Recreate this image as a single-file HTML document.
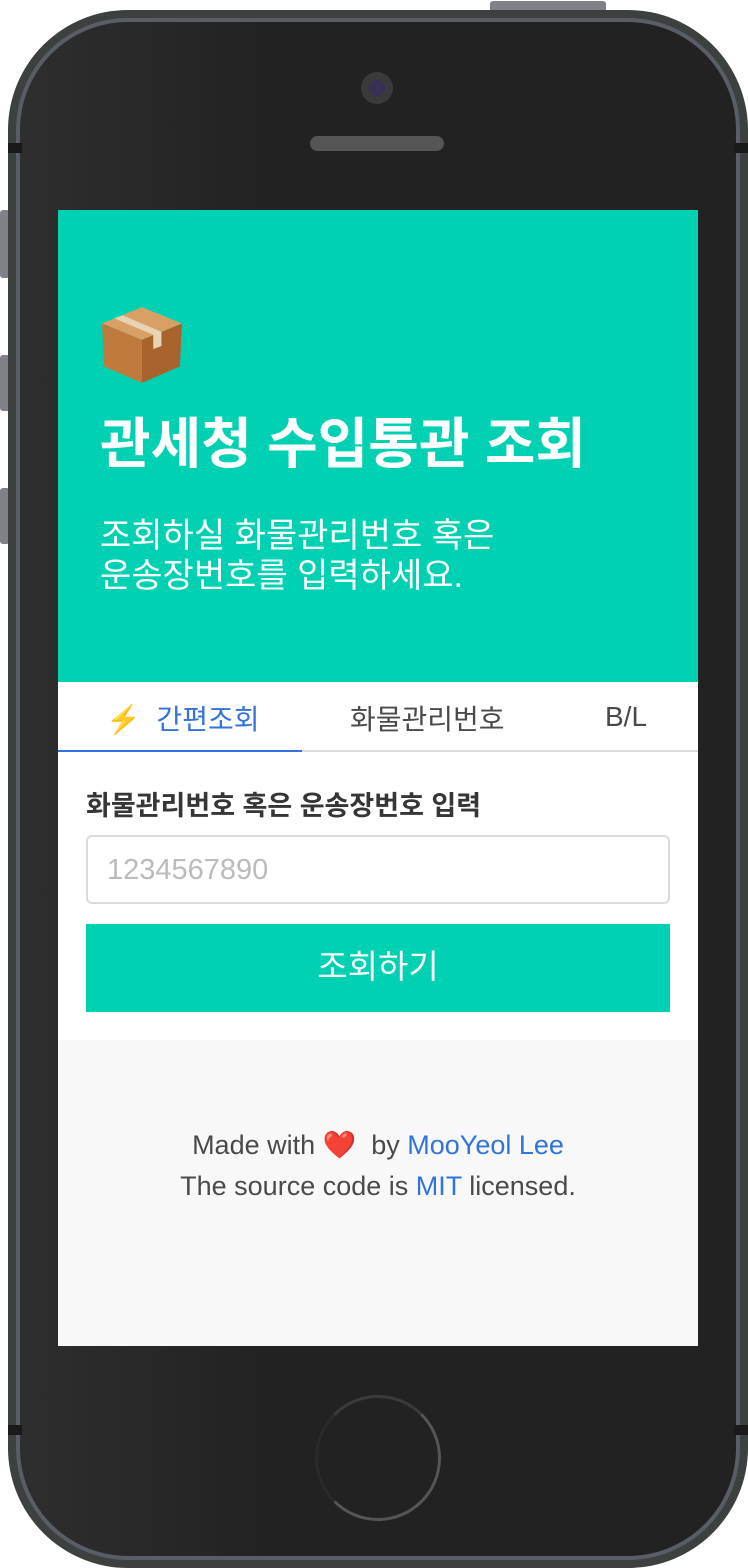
<!DOCTYPE html>
<html><head><meta charset="utf-8">
<style>
*{margin:0;padding:0;box-sizing:border-box}
body{width:748px;height:1568px;background:#fff;position:relative;overflow:hidden;font-family:"Liberation Sans","Noto Sans CJK KR",sans-serif}
.btn{position:absolute;background:#808088;border-radius:3px}
.body{position:absolute;left:8px;top:10px;width:740px;height:1558px;border-radius:120px;background:#3c403e}
.rim{position:absolute;left:16px;top:18px;width:724px;height:1542px;border-radius:112px;background:#585d66}
.face{position:absolute;left:20px;top:22px;width:716px;height:1534px;border-radius:108px;background:linear-gradient(90deg,#2e2e2e,#222 35%,#222)}
.screen{position:absolute;left:58px;top:210px;width:640px;height:1136px;background:#f8f8f8;overflow:hidden}
.hero{height:472px;background:#00d1b2;position:relative;color:#fff}
.hero h1{position:absolute;left:42px;top:196px;font-size:55px;font-weight:bold;line-height:76px;white-space:nowrap}
.hero p{position:absolute;left:42px;top:306px;font-size:34px;line-height:40px;white-space:nowrap}
.tabs{height:70px;background:#fff;position:relative;border-bottom:2px solid #dbdbdb}
.tab{position:absolute;top:16px;font-size:28px;color:#4a4a4a;white-space:nowrap}
.form{background:#fff;height:288px;position:relative}
.label{position:absolute;left:28px;top:32px;font-size:27px;font-weight:bold;color:#363636;white-space:nowrap}
.inp{position:absolute;left:28px;top:83px;width:584px;height:69px;border:2px solid #dbdbdb;border-radius:6px;font-size:29px;color:#bbb;padding:17px 0 0 19px}
.go{position:absolute;left:28px;top:172px;width:584px;height:88px;background:#00d1b2;color:#fff;font-size:33px;text-align:center;line-height:86px}
.foot{text-align:center;font-size:27px;color:#4a4a4a;line-height:41px;padding-top:85px}
.foot a{color:#3273dc;text-decoration:none}
</style></head><body>
<div class="btn" style="left:490px;top:1px;width:116px;height:14px"></div>
<div class="btn" style="left:0;top:210px;width:10px;height:68px"></div>
<div class="btn" style="left:0;top:355px;width:10px;height:56px"></div>
<div class="btn" style="left:0;top:488px;width:10px;height:56px"></div>
<div class="body"></div>
<div class="rim"></div>
<div class="face"></div>
<div style="position:absolute;left:8px;top:143px;width:14px;height:10px;background:#1a1a1a"></div>
<div style="position:absolute;left:734px;top:143px;width:14px;height:10px;background:#1a1a1a"></div>
<div style="position:absolute;left:8px;top:1425px;width:14px;height:10px;background:#1a1a1a"></div>
<div style="position:absolute;left:734px;top:1425px;width:14px;height:10px;background:#1a1a1a"></div>
<div style="position:absolute;left:361px;top:72px;width:32px;height:32px;border-radius:50%;background:#3a3a3a"></div>
<div style="position:absolute;left:369px;top:80px;width:16px;height:16px;border-radius:50%;background:#3a2f55"></div>
<div style="position:absolute;left:310px;top:136px;width:134px;height:15px;border-radius:8px;background:#555"></div>
<div style="position:absolute;left:315px;top:1395px;width:126px;height:126px;border-radius:50%;border:3px solid #555;border-left-color:#2a2a2a;border-top-color:#3a3a3a"></div>
<div class="screen">
 <div class="hero">
  <svg style="position:absolute;left:42px;top:91px" width="84" height="86" viewBox="0 0 82 84"><polygon points="41,6 80,22 41,38 2,22" fill="#d9a066"/><polygon points="2,22 41,38 41,80 4,64" fill="#c17a3e"/><polygon points="41,38 80,22 78,64 41,80" fill="#a8642c"/><polygon points="22,14 60,30 60,44 52,47 52,33 14,17" fill="#e8d3b4"/></svg>
  <h1>관세청 수입통관 조회</h1>
  <p>조회하실 화물관리번호 혹은<br>운송장번호를 입력하세요.</p>
 </div>
 <div class="tabs">
  <div class="tab" style="left:48px;color:#3273dc"><span style="color:#f5b400">⚡</span>&nbsp; 간편조회</div>
  <div class="tab" style="left:292px">화물관리번호</div>
  <div class="tab" style="left:547px;top:19px">B/L</div>
  <div style="position:absolute;left:0;bottom:-2px;width:244px;height:2px;background:#3273dc"></div>
 </div>
 <div class="form">
  <div class="label">화물관리번호 혹은 운송장번호 입력</div>
  <div class="inp">1234567890</div>
  <div class="go">조회하기</div>
 </div>
 <div class="foot">Made with <span style="color:#e0202a">❤️</span>&nbsp; by <a>MooYeol Lee</a><br>The source code is <a>MIT</a> licensed.</div>
</div>
</body></html>
